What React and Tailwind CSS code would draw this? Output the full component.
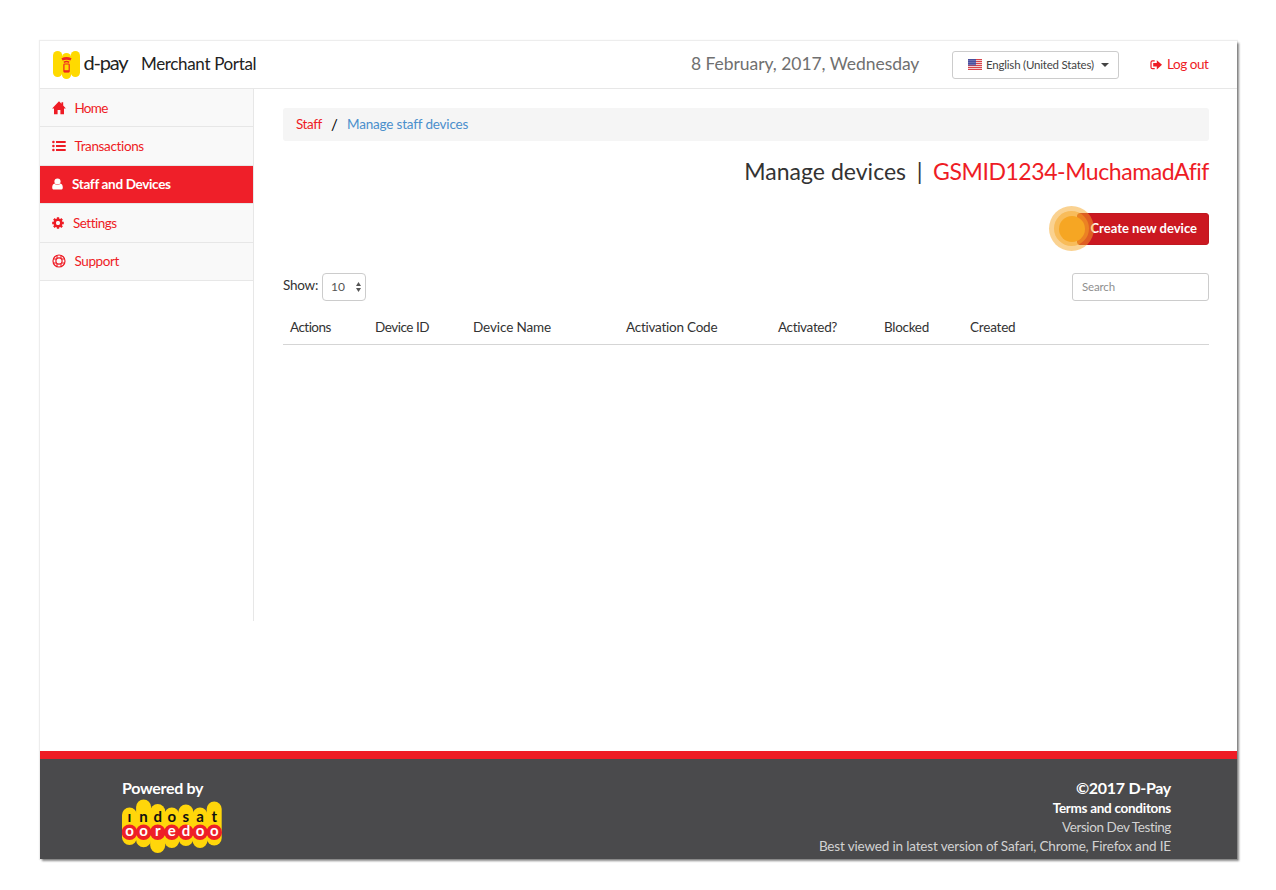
function HomeIcon() {
  return (
    <svg className="h-[14px] w-[14px]" viewBox="0 0 14 14" fill="currentColor">
      <path d="M7 .2 9.500 2.800V1.300H11.200V4.600L13.900 7.500H12V13.300H8.400V8.900H5.600V13.300H2V7.500H.1Z" />
    </svg>
  );
}

function ListIcon() {
  return (
    <svg className="h-[14px] w-[14px]" viewBox="0 0 14 14" fill="currentColor">
      <circle cx="1.4" cy="3" r="1.3" />
      <circle cx="1.4" cy="7" r="1.3" />
      <circle cx="1.4" cy="11" r="1.3" />
      <path d="M4 2h9.7v2H4zM4 6h9.7v2H4zM4 10h9.7v2H4z" />
    </svg>
  );
}

function UserIcon() {
  return (
    <svg className="h-[14px] w-[11px]" viewBox="0 0 11 14" fill="currentColor">
      <circle cx="5.5" cy="4.5" r="3.1" />
      <path d="M2.7 6.4C1 6.7.2 8.3.2 10.4.2 11.900 1 12.600 2.200 12.600H8.800C10 12.600 10.800 11.900 10.800 10.400 10.800 8.300 10 6.700 8.300 6.400 7.500 7.500 6.600 8 5.500 8S3.500 7.500 2.700 6.400Z" />
    </svg>
  );
}

function CogIcon() {
  return (
    <svg className="h-[14px] w-[12px]" viewBox="0 0 12 14">
      <circle cx="6" cy="7" r="3.2" fill="none" stroke="currentColor" strokeWidth="2.6" />
      <path
        d="M6 1.200V4M6 10V12.800M.2 7H3M9 7H11.800M1.900 2.900 3.900 4.900M8.100 9.100 10.100 11.100M10.100 2.900 8.100 4.900M3.900 9.100 1.900 11.100"
        stroke="currentColor"
        strokeWidth="2.3"
      />
      <circle cx="6" cy="7" r="1.9" fill="#f9f9f9" />
    </svg>
  );
}

function LifeRingIcon() {
  return (
    <svg className="h-[14px] w-[14px]" viewBox="0 0 14 14" fill="none" stroke="currentColor">
      <circle cx="7" cy="7" r="6" strokeWidth="1.2" />
      <circle cx="7" cy="7" r="3.1" strokeWidth="1.2" />
      <path
        d="M5 1.500V4.300M9 1.500V4.300M5 9.700V12.500M9 9.700V12.500M1.500 5H4.300M1.500 9H4.300M9.700 5H12.500M9.700 9H12.500"
        strokeWidth="1.1"
      />
    </svg>
  );
}

function SignOutIcon() {
  return (
    <svg className="h-[12px] w-[12px]" viewBox="0 0 12 12" fill="currentColor">
      <path
        d="M4.700 1.900H2.500C1.500 1.900 1 2.400 1 3.400V8.200C1 9.200 1.500 9.700 2.500 9.700H4.700"
        fill="none"
        stroke="currentColor"
        strokeWidth="1.2"
      />
      <path d="M3.200 4H6.800V1.200L12 5.800 6.800 10.400V7.600H3.200Z" />
    </svg>
  );
}

function Flag() {
  return (
    <svg className="h-[11px] w-[14px] shrink-0" viewBox="0 0 14 11">
      <rect width="14" height="11" fill="#f3d0d2" />
      <path d="M0 .5H14M0 2.500H14M0 4.500H14M0 6.500H14M0 8.500H14M0 10.500H14" stroke="#d9434a" strokeWidth="1" />
      <rect width="8" height="6.5" fill="#4a4f9e" />
      <path d="M.5 1.500H8M.5 3.500H8M.5 5.500H8" stroke="#9fa3d3" strokeWidth=".8" strokeDasharray="1 1" />
    </svg>
  );
}

function DPayLogo() {
  return (
    <svg className="h-[28px] w-[27px]" viewBox="0 0 27 28">
      <g fill="#ffda00">
        <rect x="0" y="0" width="9.2" height="26" rx="4.6" />
        <rect x="8.9" y="2" width="9.2" height="26" rx="4.6" />
        <rect x="17.8" y="0" width="9.2" height="26" rx="4.6" />
        <rect x="4.5" y="5" width="18" height="17" />
      </g>
      <g fill="none" stroke="#ee2722">
        <path d="M9 8.400Q13.500 6.400 18 8.400" strokeWidth="2.6" />
        <path d="M10.800 11.300Q13.500 9.700 16.200 11.300" strokeWidth="1.5" />
        <rect x="10.900" y="13" width="5.300" height="8" rx=".7" strokeWidth="1.2" />
        <path d="M11 20.200H16" strokeWidth="2" />
      </g>
    </svg>
  );
}

const PILLS = [
  { x: 7.5, top: 8.5, bottom: 46, upper: "ı", lower: "o" },
  { x: 21.6, top: 0.5, bottom: 48.3, upper: "n", lower: "o" },
  { x: 35.7, top: 5, bottom: 54, upper: "d", lower: "r" },
  { x: 49.8, top: 8.5, bottom: 49, upper: "o", lower: "e" },
  { x: 63.9, top: 5.5, bottom: 47, upper: "s", lower: "d" },
  { x: 78, top: 8.5, bottom: 49, upper: "a", lower: "o" },
  { x: 92.2, top: 2.5, bottom: 46.5, upper: "t", lower: "o" },
];

function IndosatLogo() {
  return (
    <svg className="h-[55px] w-[100px]" viewBox="0 0 100 55">
      <rect x="7" y="14" width="86" height="27" fill="#ffd60a" />
      {PILLS.map((p) => (
        <rect key={p.x} x={p.x - 7.5} y={p.top} width="15" height={p.bottom - p.top} rx="7.5" fill="#ffd60a" />
      ))}
      {PILLS.map((p) => (
        <g key={p.x} className="font-['Lato',sans-serif] font-bold" textAnchor="middle">
          <circle cx={p.x} cy="33.3" r="7.8" fill="#ee1f27" />
          <text x={p.x} y="22.8" fontSize="15" fill="#111">{p.upper}</text>
          <text x={p.x} y="37.3" fontSize="15" fill="#fff">{p.lower}</text>
        </g>
      ))}
    </svg>
  );
}

const NAV = [
  { label: "Home", Icon: HomeIcon, text: "ml-[8.5px] tracking-[-0.74px]" },
  { label: "Transactions", Icon: ListIcon, text: "ml-[8.5px] tracking-[-0.36px]" },
  { label: "Staff and Devices", Icon: UserIcon, text: "ml-[9px] font-bold tracking-[-0.33px]", active: true },
  { label: "Settings", Icon: CogIcon, text: "ml-[9px] tracking-[-0.5px]" },
  { label: "Support", Icon: LifeRingIcon, text: "ml-[8.5px] tracking-[-0.4px]" },
];

const COLUMNS = [
  { label: "Actions", cls: "tracking-[-0.53px]" },
  { label: "Device ID", cls: "tracking-[-0.48px]" },
  { label: "Device Name", cls: "tracking-[-0.11px]" },
  { label: "Activation Code", cls: "tracking-[-0.24px]" },
  { label: "Activated?", cls: "tracking-[-0.34px]" },
  { label: "Blocked", cls: "tracking-[-0.3px]" },
  { label: "Created", cls: "tracking-[-0.2px]" },
];

function Header() {
  return (
    <header className="flex h-[48px] shrink-0 items-center border-b border-[#e7e7e7] pr-[28px] pl-[13px] whitespace-nowrap">
      <DPayLogo />
      <span className="mt-[-5px] ml-[3.5px] w-[57.5px] text-[20px] leading-[24px] tracking-[-1.17px] text-[#222]">d-pay</span>
      <span className="mt-[-2px] text-[17px] leading-[24px] tracking-[-0.34px] text-[#222]">Merchant Portal</span>
      <span className="mt-[-2px] ml-auto w-[261px] text-[17.5px] leading-[24px] tracking-[-0.05px] text-[#707070]">8 February, 2017, Wednesday</span>
      <button className="flex h-[28px] w-[167px] items-center rounded-[3px] border border-[#ccc] pl-[15px] text-[11.5px] tracking-[-0.2px] text-[#444]">
        <Flag />
        <span className="ml-[4px] w-[115px] text-left">English (United States)</span>
        <svg className="h-[4px] w-[8px]" viewBox="0 0 8 4"><path d="M0 0H8L4 4Z" fill="#444" /></svg>
      </button>
      <a className="ml-[31px] flex w-[59px] items-center text-[13.5px] tracking-[-0.44px] text-[#ee1c25]">
        <SignOutIcon />
        <span className="ml-[5px]">Log out</span>
      </a>
    </header>
  );
}

function Sidebar() {
  return (
    <nav className="h-[532px] w-[214px] shrink-0 border-r border-[#e7e7e7]">
      {NAV.map(({ label, Icon, text, active }) => (
        <a
          key={label}
          className={
            active
              ? "flex h-[38.4px] items-center border-b border-[#e7e7e7] bg-[#ef1f29] pl-[12px] text-[13.5px] text-white"
              : "flex h-[38.4px] items-center border-b border-[#e7e7e7] bg-[#f9f9f9] pl-[12px] text-[13.5px] text-[#ee1c25]"
          }
        >
          <Icon />
          <span className={text}>{label}</span>
        </a>
      ))}
    </nav>
  );
}

function Main() {
  return (
    <main className="flex-1 pt-[19px] pr-[28px] pl-[29px]">
      <div className="flex h-[33px] items-center rounded-[3px] bg-[#f5f5f5] pl-[13px] text-[13.5px]">
        <span className="w-[35px] tracking-[-0.4px] text-[#ee1c25]">Staff</span>
        <span className="w-[16px] text-[15px] text-black">/</span>
        <span className="tracking-[-0.18px] text-[#4a8fcc]">Manage staff devices</span>
      </div>
      <h1 className="mt-[14px] flex h-[32px] items-center justify-end text-[23px] whitespace-nowrap text-[#333]">
        <span className="tracking-[0.02px]">Manage devices</span>
        <span className="w-[27px] text-center">|</span>
        <span className="tracking-[-0.44px] text-[#ee1c25]">GSMID1234-MuchamadAfif</span>
      </h1>
      <div className="mt-[26px] flex justify-end">
        <button className="relative flex h-[32px] w-[132px] items-center justify-end rounded-[3px] border border-[#c01820] bg-[#cb1821] pr-[11px] text-[13px] font-bold whitespace-nowrap text-white">
          Create new device
          <span className="absolute top-[-8px] left-[-29px] flex h-[45px] w-[45px] items-center justify-center rounded-full bg-[#f6a623]/50">
            <span className="flex h-[35px] w-[35px] items-center justify-center rounded-full bg-[#f6a623]/50">
              <span className="h-[26px] w-[26px] rounded-full bg-[#f6a623]" />
            </span>
          </span>
        </button>
      </div>
      <div className="mt-[28px] flex h-[28px] items-center">
        <span className="mt-[-3px] w-[39px] text-[13.5px] tracking-[-0.25px] text-[#333]">Show:</span>
        <div className="flex h-[28px] w-[44px] items-center justify-between rounded-[4px] border border-[#ccc] pr-[4px] pl-[8px] text-[12px] text-[#555]">
          10
          <svg className="h-[10px] w-[5px]" viewBox="0 0 5 10" fill="#555"><path d="M0 4 2.500 0 5 4ZM0 6H5L2.500 10Z" /></svg>
        </div>
        <div className="ml-auto flex h-[28px] w-[137px] items-center rounded-[3px] border border-[#ccc] pl-[9px] text-[11.5px] tracking-[-0.15px] text-[#8f8f8f]">Search</div>
      </div>
      <div className="mt-[8px] grid h-[36px] grid-cols-[85px_98px_153px_152px_106px_86px_1fr] items-center border-b border-[#d5d5d5] pt-[2px] pl-[7px] text-[13.5px] text-[#333]">
        {COLUMNS.map((c) => (
          <span key={c.label} className={c.cls}>{c.label}</span>
        ))}
      </div>
    </main>
  );
}

function Footer() {
  return (
    <footer className="flex h-[108px] shrink-0 justify-between border-t-8 border-[#ee1c25] bg-[#4a4a4c] pr-[66px] pl-[82px] whitespace-nowrap text-white">
      <div className="pt-[18.5px]">
        <div className="h-[21px] text-[16px] leading-[20px] font-bold tracking-[-0.33px]">Powered by</div>
        <IndosatLogo />
      </div>
      <div className="flex flex-col items-end pt-[18.5px] text-[13.5px] leading-[19px] text-[#d2d2d2]">
        <span className="h-[21px] text-[16px] leading-[20px] font-bold tracking-[-0.3px] text-white">©2017 D-Pay</span>
        <span className="font-bold tracking-[-0.29px] text-white">Terms and conditons</span>
        <span className="tracking-[-0.4px]">Version Dev Testing</span>
        <span className="tracking-[-0.16px]">Best viewed in latest version of Safari, Chrome, Firefox and IE</span>
      </div>
    </footer>
  );
}

export default function App() {
  return (
    <div className="h-[890px] w-[1276px] overflow-hidden bg-white pt-[41px] pl-[40px] font-['Lato',sans-serif]">
      <div className="flex h-[818px] w-[1197px] flex-col bg-white shadow-[2px_2px_2px_0px_rgba(0,0,0,0.45),0px_0px_1px_1px_rgba(0,0,0,0.07)]">
        <Header />
        <div className="flex flex-1">
          <Sidebar />
          <Main />
        </div>
        <Footer />
      </div>
    </div>
  );
}
